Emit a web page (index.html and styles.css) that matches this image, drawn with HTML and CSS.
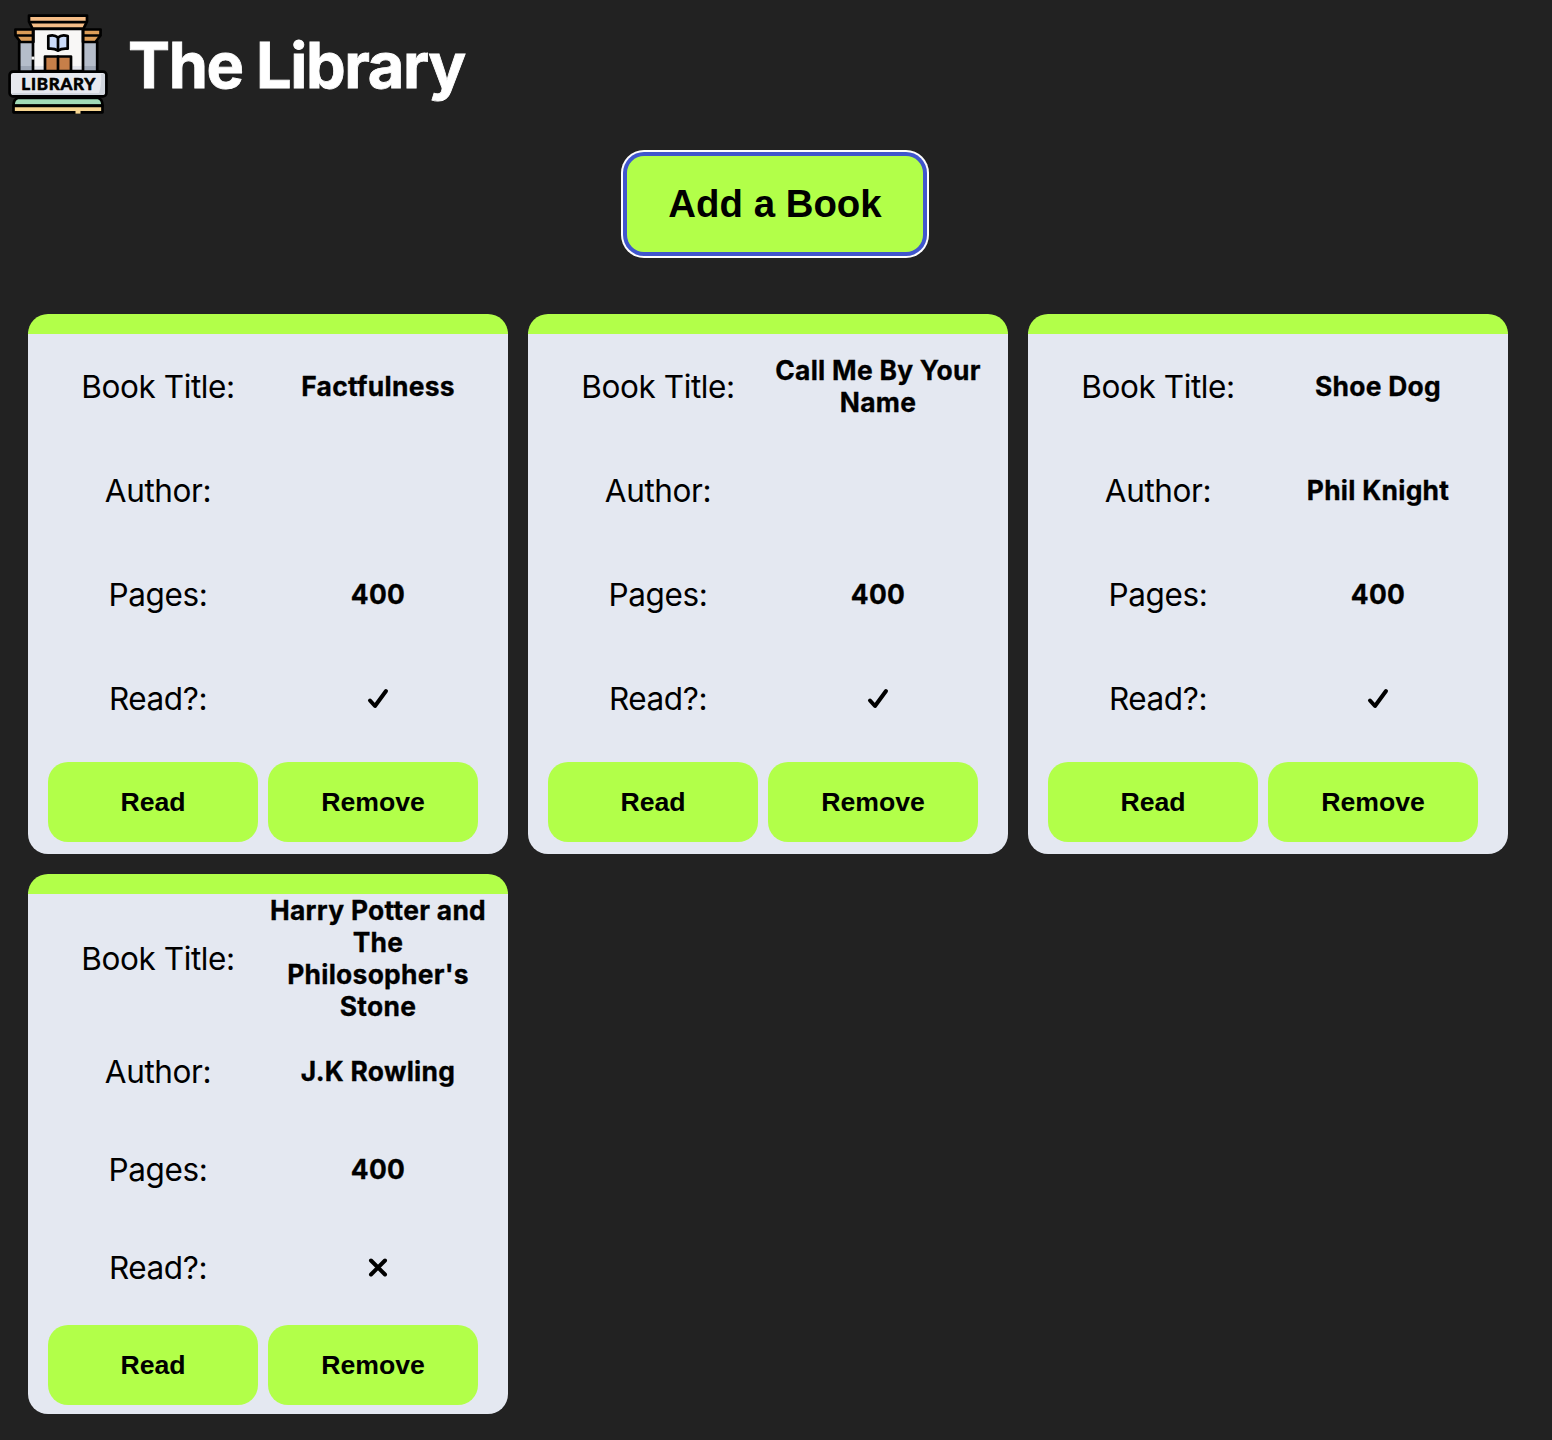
FILE: index.html
```html
<!DOCTYPE html>
<html lang="en">
<head>
<meta charset="utf-8">
<title>The Library</title>
<link rel="stylesheet" href="styles.css">
</head>
<body>
<header class="header">
  <svg class="logo" viewBox="0 0 100 100" role="img" aria-label="Library">
    <path d="M11.200 28h78v29h-78z" fill="#b5bdca"/>
    <path d="M11.200 52h78v5h-78z" fill="#9da6b5"/>
    <path d="M25 15h50v42H25z" fill="#f8f7f6"/>
    <path d="M25 52h50v5H25z" fill="#e4e6ec"/>
    <g stroke="#000" stroke-width="2.700" stroke-linejoin="round" stroke-linecap="round">
      <path d="M11.200 28v29M89.200 28v29" fill="none"/>
      <path d="M7.400 15.500h18v12.500H12.500l-5-6.500zM92.600 15.500H75v12.500h12.500l5-6.500z" fill="#dc9d58"/>
      <path d="M8 21.500h16M76 21.500h16"/>
      <path d="M25 15h50v42H25z" fill="none"/>
      <path d="M21 1.600h58v6l-3.500 7H24.500L21 7.600z" fill="#f5bd87"/>
      <path d="M22 8.200h56"/>
      <path d="M37 42.500h26V57H37z" fill="#c67f49"/>
      <path d="M50 42.500V57"/>
      <path d="M40.300 22q6-2 9.700 1.500q3.700-3.500 9.700-1.500v12.700q-6-.7-9.700 2q-3.700-2.700-9.700-2z" fill="#cbdcfa"/>
      <path d="M50 24v12"/>
      <path d="M10 84h80q4.500 1 4.500 7.500h-89q0-6.500 4.500-7.500z" fill="#a1dab8"/>
      <path d="M5.500 91.800h89v6.500h-89z" fill="#f6d591"/>
      <rect x="1.600" y="57.600" width="96.800" height="24.800" rx="3.500" fill="#e7e9ef"/>
    </g>
    <path d="M25 42.600v3" stroke="#f8f7f6" stroke-width="3"/>
    <path d="M67.500 98.300h5" stroke="#f6d591" stroke-width="2.700"/>
    <path d="M93 60q4-1 4 2v16q0 3-3 3H4v-2h87q3-9 2-19z" fill="#d0d5dd"/>
    <text class="logo-text" x="50.300" y="76" text-anchor="middle" textLength="74">LIBRARY</text>
  </svg>
  <h1 class="title">The Library</h1>
</header>
<main>
  <div class="toolbar"><button class="add" type="button">Add a Book</button></div>
  <section class="books">
    <article class="card">
      <span class="label">Book Title:</span><span class="value">Factfulness</span>
      <span class="label">Author:</span><span class="value"></span>
      <span class="label">Pages:</span><span class="value">400</span>
      <span class="label">Read?:</span><svg class="mark" viewBox="0 0 24 24"><path d="M4 14.500l5 5.500L20 5"/></svg>
      <div class="actions"><button type="button">Read</button><button type="button">Remove</button></div>
    </article>
    <article class="card">
      <span class="label">Book Title:</span><span class="value">Call Me By Your Name</span>
      <span class="label">Author:</span><span class="value"></span>
      <span class="label">Pages:</span><span class="value">400</span>
      <span class="label">Read?:</span><svg class="mark" viewBox="0 0 24 24"><path d="M4 14.500l5 5.500L20 5"/></svg>
      <div class="actions"><button type="button">Read</button><button type="button">Remove</button></div>
    </article>
    <article class="card">
      <span class="label">Book Title:</span><span class="value">Shoe Dog</span>
      <span class="label">Author:</span><span class="value">Phil Knight</span>
      <span class="label">Pages:</span><span class="value">400</span>
      <span class="label">Read?:</span><svg class="mark" viewBox="0 0 24 24"><path d="M4 14.500l5 5.500L20 5"/></svg>
      <div class="actions"><button type="button">Read</button><button type="button">Remove</button></div>
    </article>
    <article class="card">
      <span class="label">Book Title:</span><span class="value">Harry Potter and The Philosopher's Stone</span>
      <span class="label">Author:</span><span class="value">J.K Rowling</span>
      <span class="label">Pages:</span><span class="value">400</span>
      <span class="label">Read?:</span><svg class="mark" viewBox="0 0 24 24"><path d="M5 5.500l14 14M19 5.500l-14 14"/></svg>
      <div class="actions"><button type="button">Read</button><button type="button">Remove</button></div>
    </article>
  </section>
</main>
</body>
</html>
```
FILE: styles.css
```css
* { box-sizing: border-box; }
body {
  margin: 0;
  background: #222;
  color: #000;
  font-family: Inter, "Liberation Sans", sans-serif;
}
.header {
  display: flex;
  align-items: center;
  gap: 20px;
  height: 128px;
  padding-left: 8px;
}
.logo { width: 100px; height: 100px; }
.logo-text { font: 700 17px Lato, sans-serif; stroke: #000; stroke-width: .7px; stroke-linejoin: round; }
.title {
  margin: 0;
  padding-top: 2px;
  color: #fff;
  font-size: 63px;
  font-weight: 700;
  letter-spacing: -1.4px;
  -webkit-text-stroke: .8px #fff;
}
button {
  border: 0;
  border-radius: 20px;
  background: #b2ff49;
  color: #000;
  font: 700 26.67px "Liberation Sans", Arial, sans-serif;
}
.toolbar {
  display: flex;
  justify-content: center;
  height: 186px;
  padding: 28px 2px 0 0;
}
.add {
  width: 296px;
  height: 96px;
  font-size: 38.4px;
  border-radius: 17px;
  box-shadow: 0 0 0 4px #4056cd, 0 0 0 6px #fff;
}
.books {
  display: grid;
  grid-template-columns: repeat(3, 480px);
  gap: 20px;
  padding-left: 28px;
}
.card {
  display: grid;
  grid-template-columns: 220px 220px;
  grid-template-rows: repeat(5, 1fr);
  align-items: center;
  justify-items: center;
  height: 540px;
  padding: 0 20px;
  border-top: 20px solid #b2ff49;
  border-radius: 20px;
  background: #e4e8f1;
}
.label { font-size: 31.5px; letter-spacing: -.4px; }
.value {
  font-size: 26.4px;
  font-weight: 700;
  line-height: 32px;
  letter-spacing: .28px;
  text-align: center;
  -webkit-text-stroke: .3px #000;
}
.mark {
  width: 24px;
  height: 24px;
  fill: none;
  stroke: #000;
  stroke-width: 4;
  stroke-linecap: round;
  stroke-linejoin: round;
}
.actions {
  grid-column: 1 / -1;
  justify-self: start;
  display: flex;
  gap: 10px;
}
.actions button { width: 210px; height: 80px; }
```
